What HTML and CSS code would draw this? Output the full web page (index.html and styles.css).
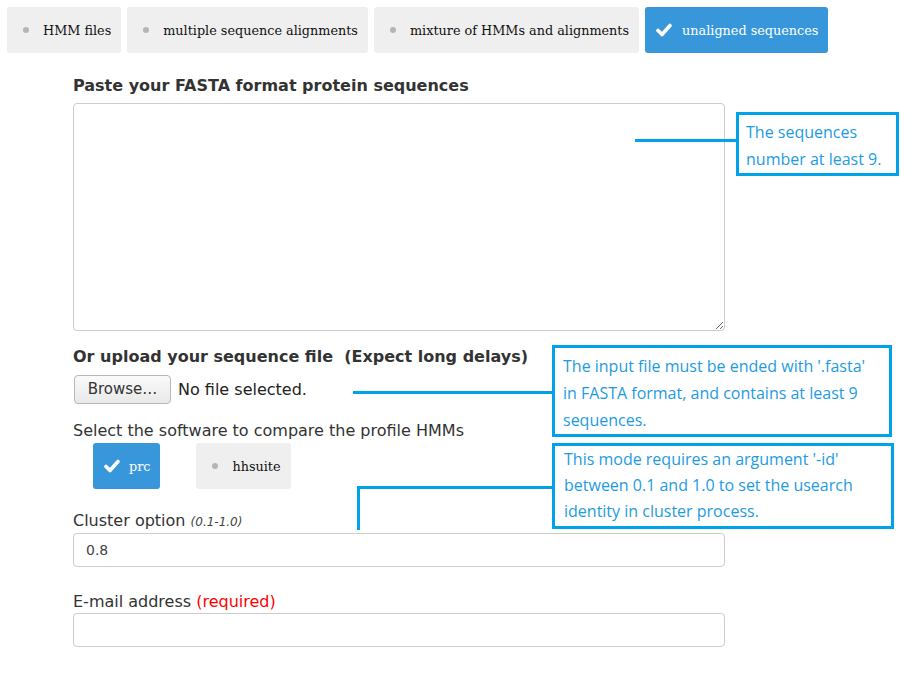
FILE: index.html
```html
<!DOCTYPE html>
<html>
<head>
<meta charset="utf-8">
<link rel="stylesheet" href="styles.css">
</head>
<body>
<div class="tabs">
  <div class="tab"><span class="ico"><span class="dot"></span></span><span>HMM files</span></div>
  <div class="tab"><span class="ico"><span class="dot"></span></span><span>multiple sequence alignments</span></div>
  <div class="tab"><span class="ico"><span class="dot"></span></span><span>mixture of HMMs and alignments</span></div>
  <div class="tab active"><span class="ico"><svg width="16" height="14" viewBox="0 0 16 14"><polyline points="2,7.5 6,11.5 14,2.5" fill="none" stroke="#fff" stroke-width="3.6" stroke-linecap="round" stroke-linejoin="round"/></svg></span><span>unaligned sequences</span></div>
</div>

<div class="form">
  <div class="h">Paste your FASTA format protein sequences</div>
  <textarea class="ta"></textarea>

  <div class="h h2">Or upload your sequence file &nbsp;(Expect long delays)</div>
  <div class="file-row"><button class="browse">Browse…</button><span class="nofile">No file selected.</span></div>

  <div class="lbl sel">Select the software to compare the profile HMMs</div>
  <div class="soft">
    <div class="tab active"><span class="ico"><svg width="16" height="14" viewBox="0 0 16 14"><polyline points="2,7.5 6,11.5 14,2.5" fill="none" stroke="#fff" stroke-width="3.6" stroke-linecap="round" stroke-linejoin="round"/></svg></span><span>prc</span></div>
    <div class="tab"><span class="ico"><span class="dot"></span></span><span>hhsuite</span></div>
  </div>

  <div class="lbl cl">Cluster option <i class="small">(0.1-1.0)</i></div>
  <div class="inp">0.8</div>

  <div class="lbl em">E-mail address <span class="req">(required)</span></div>
  <div class="inp"></div>
</div>

<div class="note n1">The sequences<br>number at least 9.</div>
<div class="hline l1"></div>
<div class="note n2">The input file must be ended with '.fasta'<br>in FASTA format, and contains at least 9<br>sequences.</div>
<div class="hline l2"></div>
<div class="note n3">This mode requires an argument '-id'<br>between 0.1 and 1.0 to set the usearch<br>identity in cluster process.</div>
<div class="hline l3"></div>
<div class="vline v3"></div>
</body>
</html>
```

FILE: styles.css
```css
html, body { margin: 0; padding: 0; background: #fff; }
body { font-family: "DejaVu Sans", sans-serif; color: #333; width: 917px; height: 675px; overflow: hidden; position: relative; }

.tabs { display: flex; gap: 6px; padding: 7px 0 0 7px; }
.tab { display: flex; align-items: center; height: 46px; padding: 0 10px 0 11px; background: #efefef; border-radius: 3px; font-family: "DejaVu Serif", serif; font-size: 12.8px; color: #111; box-sizing: border-box; }
.tab .ico { width: 16px; display: flex; justify-content: center; align-items: center; margin-right: 9px; }
.tab .dot { width: 6px; height: 6px; border-radius: 50%; background: #b5b5b5; }
.tab.active { background: #3897db; color: #fff; }
.tabs .tab.active .ico { margin-right: 10px; }

.form { margin-left: 73px; width: 652px; display: flex; flex-direction: column; }
.h { font-weight: bold; font-size: 16px; line-height: 20px; margin-top: 23px; color: #333; }
.ta { margin-top: 7px; width: 652px; height: 228px; box-sizing: border-box; border: 1px solid #ccc; border-radius: 4px; resize: both; font: inherit; }
.h2 { margin-top: 16px; }
.file-row { display: flex; align-items: center; margin-top: 8px; height: 28px; }
.browse { width: 97px; height: 29px; margin-left: 1px; font-family: "DejaVu Sans", sans-serif; font-size: 15px; color: #333; background: linear-gradient(#fafafa, #e9e9e9); border: 1px solid #b8b8b8; border-radius: 4px; padding: 0; }
.nofile { margin-left: 7px; font-size: 16px; color: #222; }
.lbl { font-size: 16px; line-height: 20px; color: #333; }
.sel { margin-top: 18px; }
.soft { display: flex; gap: 36px; margin-top: 2px; margin-left: 20px; }
.soft .tab { padding-right: 10px; }
.soft .tab.active .ico { margin-right: 9px; }
.cl { margin-top: 22px; }
.small { font-size: 12px; color: #444; }
.inp { margin-top: 1px; height: 34px; box-sizing: border-box; border: 1px solid #ccc; border-radius: 4px; padding: 0 12px; display: flex; align-items: center; font-size: 14px; color: #444; }
.em { margin-top: 25px; }
.req { color: #f00; }

.note { position: absolute; box-sizing: border-box; border: 3px solid #00a2e8; background: #fff; color: #1d9be2; font-family: "Open Sans", "Noto Sans", sans-serif; font-size: 16px; line-height: 27px; padding: 4px 0 0 7px; }
.n1 { left: 736px; top: 112px; width: 163px; height: 64px; }
.n2 { left: 552px; top: 345px; width: 340px; height: 92px; padding-top: 5px; padding-left: 8px; }
.n3 { left: 552px; top: 443px; width: 342px; height: 86px; padding-top: 0; padding-left: 9px; line-height: 26px; }
.hline { position: absolute; height: 3px; background: #00a2e8; }
.l1 { left: 635px; top: 139px; width: 102px; }
.l2 { left: 353px; top: 391px; width: 200px; }
.l3 { left: 357px; top: 486px; width: 196px; }
.vline { position: absolute; width: 3px; background: #00a2e8; }
.v3 { left: 357px; top: 486px; height: 44px; }
```
